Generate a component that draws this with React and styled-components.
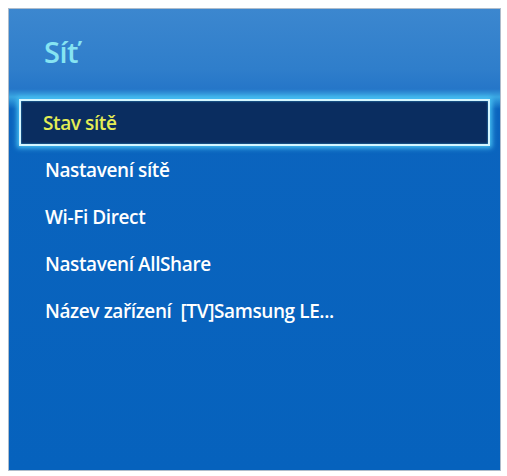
import styled, { createGlobalStyle } from "styled-components";

const GlobalStyle = createGlobalStyle`
  html, body {
    margin: 0;
    padding: 0;
    background: #ffffff;
  }
  body {
    padding: 8px;
    font-family: "Open Sans", "Noto Sans", sans-serif;
  }
`;

const Panel = styled.div`
  width: 493px;
  height: 463px;
  box-sizing: border-box;
  border: 1px solid #aebccb;
  background: linear-gradient(
    to bottom,
    #3c87cf 0px,
    #2f7ecb 60px,
    #2576c8 80px,
    #3aa6e2 88px,
    #0b64be 100px,
    #0662bd 100%
  );
  display: flex;
  flex-direction: column;
`;

const Header = styled.div`
  height: 90px;
  box-sizing: border-box;
  padding: 24px 0 0 35px;
`;

const Title = styled.h1`
  margin: 0;
  font-size: 29px;
  font-weight: 600;
  letter-spacing: -0.5px;
  color: #86e4f2;
  line-height: 38px;
`;

const List = styled.ul`
  list-style: none;
  margin: 0;
  padding: 0 10px;
  display: flex;
  flex-direction: column;
`;

const Item = styled.li`
  height: 47px;
  box-sizing: border-box;
  display: flex;
  align-items: center;
  padding-left: ${(p) => (p.$selected ? "22px" : "24px")};
  font-size: 19px;
  font-weight: 600;
  letter-spacing: -0.4px;
  white-space: pre;
  color: ${(p) => (p.$selected ? "#e4ec55" : "#ffffff")};
  background: ${(p) => (p.$selected ? "#0a2d60" : "transparent")};
  border: ${(p) => (p.$selected ? "2px solid #d4f6ff" : "2px solid transparent")};
  box-shadow: ${(p) =>
    p.$selected ? "0 0 5px 2px #49c4f4, inset 0 0 2px #3aa8e0" : "none"};
`;

const items = [
  "Stav sítě",
  "Nastavení sítě",
  "Wi-Fi Direct",
  "Nastavení AllShare",
  "Název zařízení  [TV]Samsung LE...",
];

export default function App() {
  return (
    <>
      <GlobalStyle />
      <Panel>
        <Header>
          <Title>Síť</Title>
        </Header>
        <List>
          {items.map((label, i) => (
            <Item key={label} $selected={i === 0}>
              {label}
            </Item>
          ))}
        </List>
      </Panel>
    </>
  );
}
